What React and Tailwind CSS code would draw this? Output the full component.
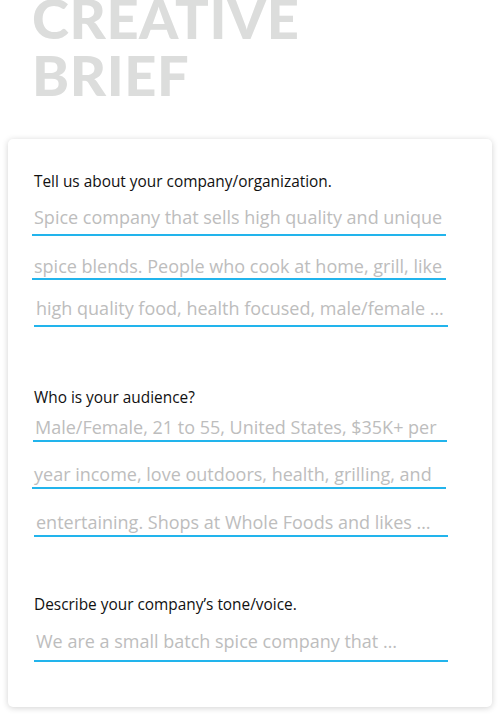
const BODY = "font-['Open_Sans','Noto_Sans',sans-serif]";
const TITLE = "font-['Lato','Open_Sans',sans-serif]";

const SECTIONS = [
  {
    label: 'Tell us about your company/organization.',
    labelCls: 'mt-[33px]',
    rows: [
      { text: 'Spice company that sells high quality and unique', cls: 'mt-[13px] pb-[5px]' },
      { text: 'spice blends. People who cook at home, grill, like', cls: 'mt-[18px] pb-0' },
      { text: 'high quality food, health focused, male/female …', cls: 'mt-[16px] pb-[5px] ml-[2px] -mr-[2px]' },
    ],
  },
  {
    label: 'Who is your audience?',
    labelCls: 'mt-[61px]',
    rows: [
      { text: 'Male/Female, 21 to 55, United States, $35K+ per', cls: 'mt-[7px] pb-[1px] ml-[1px] -mr-[1px]' },
      { text: 'year income, love outdoors, health, grilling, and', cls: 'mt-[20px] pb-[1px]' },
      { text: 'entertaining. Shops at Whole Foods and likes …', cls: 'mt-[21px] pb-[1px] ml-[2px] -mr-[2px]' },
    ],
  },
  {
    label: 'Describe your company’s tone/voice.',
    labelCls: 'mt-[58px]',
    rows: [
      { text: 'We are a small batch spice company that …', cls: 'mt-[14px] pb-[7px] ml-[2px] -mr-[2px]' },
    ],
  },
];

export default function App() {
  return (
    <div className={`min-h-[718px] bg-white ${BODY} overflow-hidden`}>
      {/* Title */}
      <h1 className={`${TITLE} px-8 -mt-[11px] text-[56px] leading-[57px] font-black tracking-[0.01em] text-[#dcdddc]`}>
        CREATIVE
        <br />
        BRIEF
      </h1>

      {/* Form card */}
      <div className="mx-2 mt-[36px] rounded-[5px] bg-white pl-6 pr-[46px] pb-[45px] shadow-[0_1px_6px_rgba(0,0,0,0.18)]">
        {SECTIONS.map(({ label, labelCls, rows }) => (
          <div key={label} className="flex flex-col">
            <p className={`${labelCls} pl-[2px] text-[15.4px] leading-[20px] text-[#111]`}>{label}</p>
            {rows.map(({ text, cls }) => (
              <div key={text} className={`${cls} border-b-2 border-[#22b4ec] pl-[2px] text-[18px] leading-[24px] text-[#bdbdbd] whitespace-nowrap`}>
                {text}
              </div>
            ))}
          </div>
        ))}
      </div>
    </div>
  );
}
